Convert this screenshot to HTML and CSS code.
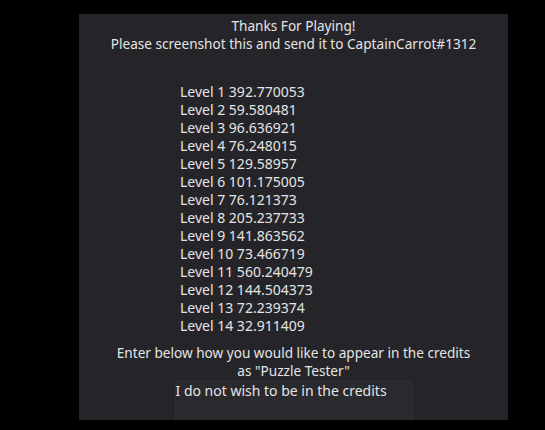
FILE: index.html
```html
<!DOCTYPE html>
<html>
<head>
<meta charset="utf-8">
<link rel="stylesheet" href="styles.css">
</head>
<body>
<div class="panel">
  <div class="title">
    <div>Thanks For Playing!</div>
    <div>Please screenshot this and send it to CaptainCarrot#1312</div>
  </div>
  <div class="levels">
    <div>Level 1 392.770053</div>
    <div>Level 2 59.580481</div>
    <div>Level 3 96.636921</div>
    <div>Level 4 76.248015</div>
    <div>Level 5 129.58957</div>
    <div>Level 6 101.175005</div>
    <div>Level 7 76.121373</div>
    <div>Level 8 205.237733</div>
    <div>Level 9 141.863562</div>
    <div>Level 10 73.466719</div>
    <div>Level 11 560.240479</div>
    <div>Level 12 144.504373</div>
    <div>Level 13 72.239374</div>
    <div>Level 14 32.911409</div>
  </div>
  <div class="prompt">
    <div>Enter below how you would like to appear in the credits</div>
    <div>as "Puzzle Tester"</div>
  </div>
  <div class="field">I do not wish to be in the credits</div>
</div>
</body>
</html>
```

FILE: styles.css
```css
html, body {
  margin: 0;
  padding: 0;
  background: #000000;
}
body {
  font-family: "Noto Sans", "DejaVu Sans", sans-serif;
  font-size: 14px;
  line-height: 18px;
  color: #e4e4e4;
}
.panel {
  margin-left: 79px;
  margin-top: 14px;
  width: 429px;
  height: 406px;
  box-sizing: border-box;
  padding-top: 3px;
  background: #252529;
  display: flex;
  flex-direction: column;
}
.title {
  text-align: center;
  font-size: 13.6px;
}
.levels {
  margin-top: 30px;
  padding-left: 101px;
}
.prompt {
  margin-top: 9px;
  text-align: center;
  font-size: 13.6px;
}
.field {
  margin: 1px auto 0;
  width: 238px;
  height: 39px;
  box-sizing: border-box;
  padding: 0;
  background: #29292e;
  border: 1px solid #2e2e33;
  border-bottom: none;
  white-space: nowrap;
  font-size: 14px;
}
```
